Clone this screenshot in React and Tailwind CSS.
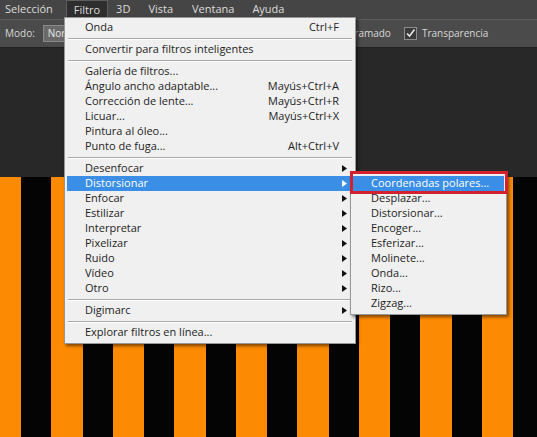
import React from 'react';

const font = { fontFamily: '"Open Sans", "Noto Sans", Arial, sans-serif' };

// menú principal de Filtro
const filterItems = [
  { label: 'Onda', shortcut: 'Ctrl+F' },
  { sep: true },
  { label: 'Convertir para filtros inteligentes' },
  { sep: true },
  { label: 'Galería de filtros...' },
  { label: 'Ángulo ancho adaptable...', shortcut: 'Mayús+Ctrl+A' },
  { label: 'Corrección de lente...', shortcut: 'Mayús+Ctrl+R' },
  { label: 'Licuar...', shortcut: 'Mayús+Ctrl+X' },
  { label: 'Pintura al óleo...' },
  { label: 'Punto de fuga...', shortcut: 'Alt+Ctrl+V' },
  { sep: true },
  { label: 'Desenfocar', sub: true },
  { label: 'Distorsionar', sub: true, active: true },
  { label: 'Enfocar', sub: true },
  { label: 'Estilizar', sub: true },
  { label: 'Interpretar', sub: true },
  { label: 'Pixelizar', sub: true },
  { label: 'Ruido', sub: true },
  { label: 'Vídeo', sub: true },
  { label: 'Otro', sub: true },
  { sep: true },
  { label: 'Digimarc', sub: true },
  { sep: true },
  { label: 'Explorar filtros en línea...' },
];

const distortItems = [
  'Coordenadas polares...',
  'Desplazar...',
  'Distorsionar...',
  'Encoger...',
  'Esferizar...',
  'Molinete...',
  'Onda...',
  'Rizo...',
  'Zigzag...',
];

// anchos de las franjas del lienzo (naranja / negro alternando)
const stripes = [21, 30, 32, 30, 31, 30, 32, 30, 31, 30, 32, 30, 31, 30, 32, 30, 31, 30, 25];

const Arrow = ({ white }) => (
  <svg width="5" height="7" viewBox="0 0 5 7" className="shrink-0">
    <path d="M0 0 L5 3.5 L0 7 Z" fill={white ? '#ffffff' : '#111111'} />
  </svg>
);

const Separator = () => (
  <div className="h-[7px] flex flex-col justify-center px-[3px]">
    <div className="h-px bg-[#a9a9a9]" />
    <div className="h-px bg-white" />
  </div>
);

const App = () => {
  return (
    <div className="relative w-[537px] h-[437px] overflow-hidden bg-[#282828]" style={font}>
      {/* barra de menús */}
      <div className="h-[19px] bg-[#454545] flex items-center text-[11px] text-[#dcdcdc]">
        <span className="ml-[5px]">Selección</span>
        <span className="ml-[13px] h-[19px] px-[7px] flex items-center bg-[#2e2e2e] border border-[#5e5e5e] border-b-0">Filtro</span>
        <span className="ml-[8px]">3D</span>
        <span className="ml-[18px]">Vista</span>
        <span className="ml-[19px]">Ventana</span>
        <span className="ml-[18px]">Ayuda</span>
      </div>

      {/* barra de opciones */}
      <div className="h-[29px] bg-[#4b4b4b] border-t border-[#5a5a5a] border-b border-b-[#202020] flex items-center text-[10px] text-[#d8d8d8]">
        <span className="ml-[5px]">Modo:</span>
        <span className="ml-[8px] h-[17px] w-[40px] px-[4px] flex items-center bg-[#6a6a6a] border border-[#8a8a8a] text-[#e8e8e8]">Normal</span>
        <span className="ml-[266px]">Tramado</span>
        <span className="ml-[13px] w-[13px] h-[13px] bg-[#3a3a3a] border border-[#8c8c8c] flex items-center justify-center">
          <svg width="11" height="11" viewBox="0 0 11 11">
            <path d="M2 5.5 L4.5 8 L9.5 1.5" stroke="#e6e6e6" strokeWidth="1.6" fill="none" />
          </svg>
        </span>
        <span className="ml-[5px]">Transparencia</span>
      </div>

      {/* lienzo: zona vacía y franjas */}
      <div className="h-[129px]" />
      <div className="flex h-[260px]">
        {stripes.map((w, i) => (
          <div
            key={i}
            className={i % 2 === 0 ? 'bg-[#fd8a03] shrink-0' : 'bg-[#040404] shrink-0'}
            style={{ width: w }}
          />
        ))}
      </div>

      {/* menú Filtro desplegado */}
      <div className="absolute left-[64px] top-[17px] w-[292px] bg-[#f0f0f0] border border-[#979797] shadow-[2px_2px_3px_rgba(0,0,0,0.5)] pt-[2px] pb-[3px] text-[11px] text-[#1e1e1e]">
        {filterItems.map((it, i) =>
          it.sep ? (
            <Separator key={i} />
          ) : (
            <div
              key={i}
              className={`h-[15px] mx-[2px] pl-[18px] pr-[6px] flex items-center ${it.active ? 'bg-[#3a8ee6] text-white' : ''}`}
            >
              <span className="flex-1 whitespace-nowrap">{it.label}</span>
              {it.shortcut && <span className="whitespace-nowrap mr-[8px]">{it.shortcut}</span>}
              {it.sub && <Arrow white={it.active} />}
            </div>
          )
        )}
      </div>

      {/* submenú Distorsionar */}
      <div className="absolute left-[350px] top-[172px] w-[157px] bg-[#f0f0f0] border border-[#979797] shadow-[2px_2px_3px_rgba(0,0,0,0.5)] pt-[3px] pb-[3px] text-[11px] text-[#1e1e1e]">
        {distortItems.map((label, i) => (
          <div
            key={i}
            className={`h-[15px] mx-[2px] pl-[18px] flex items-center whitespace-nowrap ${i === 0 ? 'bg-[#3a8ee6] text-white' : ''}`}
          >
            {label}
          </div>
        ))}
      </div>

      {/* recuadro rojo de anotación */}
      <div className="absolute left-[350px] top-[171px] w-[158px] h-[23px] border-[3px] border-[#d3222e]" />
    </div>
  );
};

export default App;
